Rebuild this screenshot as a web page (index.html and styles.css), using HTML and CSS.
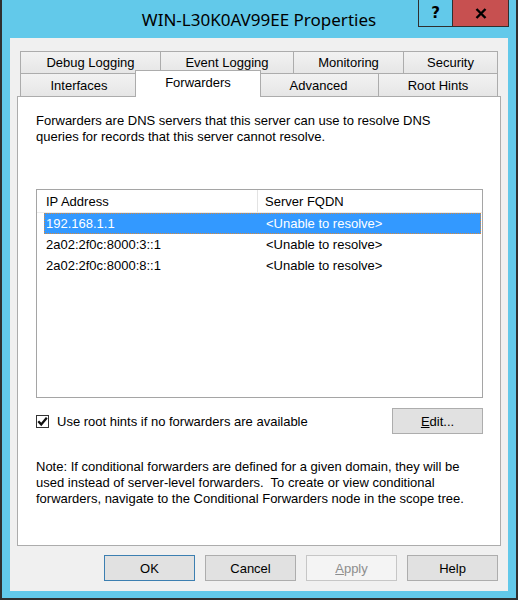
FILE: index.html
```html
<!DOCTYPE html>
<html>
<head>
<meta charset="utf-8">
<link rel="stylesheet" href="styles.css">
</head>
<body>
<div class="window">
  <div class="titlebar">
    <div class="tb-spacer"></div>
    <div class="title">WIN-L30K0AV99EE Properties</div>
    <div class="caption-btns">
      <div class="cbtn help-btn">?</div>
      <div class="cbtn close-btn">
        <svg width="12" height="11" viewBox="0 0 12 11"><path d="M1.5 1 L10.5 10 M10.5 1 L1.5 10" stroke="#000" stroke-width="2.4" fill="none"/></svg>
      </div>
    </div>
  </div>
  <div class="client">
    <div class="tabs">
      <div class="tabrow">
        <div class="tab w-debug">Debug Logging</div>
        <div class="tab w-event">Event Logging</div>
        <div class="tab w-mon">Monitoring</div>
        <div class="tab w-sec last">Security</div>
      </div>
      <div class="tabrow">
        <div class="tab w-int">Interfaces</div>
        <div class="tab selected">Forwarders</div>
        <div class="tab w-adv">Advanced</div>
        <div class="tab w-root last">Root Hints</div>
      </div>
    </div>
    <div class="panel">
      <p class="desc">Forwarders are DNS servers that this server can use to resolve DNS<br>queries for records that this server cannot resolve.</p>
      <div class="list">
        <div class="list-head">
          <div class="col1 hcell">IP Address</div>
          <div class="col2 hcell">Server FQDN</div>
        </div>
        <div class="row sel">
          <div class="col1 cell">192.168.1.1</div>
          <div class="col2 cell">&lt;Unable to resolve&gt;</div>
        </div>
        <div class="row">
          <div class="col1 cell">2a02:2f0c:8000:3::1</div>
          <div class="col2 cell">&lt;Unable to resolve&gt;</div>
        </div>
        <div class="row">
          <div class="col1 cell">2a02:2f0c:8000:8::1</div>
          <div class="col2 cell">&lt;Unable to resolve&gt;</div>
        </div>
      </div>
      <div class="opts">
        <label class="check">
          <span class="box"><svg width="11" height="11" viewBox="0 0 11 11"><path d="M1.3 5.3 L4.2 8.4 L9.8 1.8" stroke="#111" stroke-width="2.3" fill="none"/></svg></span>
          <span>Use root hints if no forwarders are available</span>
        </label>
        <div class="btn"><u>E</u>dit...</div>
      </div>
      <p class="note">Note: If conditional forwarders are defined for a given domain, they will be<br>used instead of server-level forwarders.&nbsp; To create or view conditional<br>forwarders, navigate to the Conditional Forwarders node in the scope tree.</p>
    </div>
    <div class="buttons">
      <div class="btn default">OK</div>
      <div class="btn">Cancel</div>
      <div class="btn disabled"><u>A</u>pply</div>
      <div class="btn">Help</div>
    </div>
  </div>
</div>
</body>
</html>
```

FILE: styles.css
```css
* { box-sizing: border-box; }
html, body { margin: 0; padding: 0; }
body {
  width: 518px;
  height: 600px;
  font-family: "Liberation Sans", Arial, sans-serif;
  font-size: 13px;
  color: #000;
}
.window {
  width: 518px;
  height: 600px;
  background: #62c9ea;
  border: 2px solid #2f2f2f;
  border-top: 0;
  border-bottom-width: 2px;
  display: flex;
  flex-direction: column;
}
.titlebar {
  height: 38px;
  display: grid;
  grid-template-columns: 1fr auto 1fr;
  align-items: start;
}
.title {
  font-family: "Noto Sans", "Open Sans", sans-serif;
  font-size: 17px;
  line-height: 22px;
  margin-top: 9px;
  color: #000;
}
.caption-btns {
  justify-self: end;
  margin-right: 7px;
  display: flex;
  border: 1px solid #2f2f2f;
  border-top: 0;
  height: 27px;
}
.cbtn {
  display: flex;
  align-items: center;
  justify-content: center;
  height: 26px;
}
.help-btn {
  width: 34px;
  border-right: 1px solid #2f2f2f;
  font-family: "DejaVu Sans", sans-serif;
  font-weight: bold;
  font-size: 15px;
}
.close-btn {
  width: 55px;
  background: #c75050;
}
.client {
  margin: 0 8px;
  height: 553px;
  background: #f0f0f0;
  padding: 13px 7px 0 7px;
  display: flex;
  flex-direction: column;
}
.tabs {
  margin-left: 3px;
  display: flex;
  flex-direction: column;
}
.tabrow {
  display: flex;
  align-items: flex-start;
}
.tabrow:first-child .tab { height: 22px; line-height: 22px; }
.tabrow:last-child .tab { height: 23px; line-height: 23px; }
.tab {
  border-top: 1px solid #acacac;
  border-left: 1px solid #acacac;
  background: linear-gradient(#f2f2f2, #e6e6e6);
  text-align: center;
  white-space: nowrap;
}
.tab.last { border-right: 1px solid #acacac; }
.w-debug { width: 140px; }
.w-event { width: 133px; }
.w-mon { width: 110px; }
.w-sec { width: 95px; }
.w-int { width: 117px; }
.w-adv { width: 120px; }
.w-root { width: 120px; }
.tabrow .tab.selected {
  width: 126px;
  height: 27px;
  line-height: 24px;
  margin: -3px -3px -1px -2px;
  background: #fff;
  border-right: 1px solid #acacac;
  position: relative;
  z-index: 1;
}
.panel {
  height: 450px;
  background: #fff;
  border: 1px solid #acacac;
  padding: 16px 0 0 18px;
}
.desc, .note {
  margin: 0;
  line-height: 16px;
}
.list {
  margin-top: 44px;
  width: 447px;
  height: 209px;
  border: 1px solid #a5a5a5;
  background: #fff;
}
.list-head {
  display: flex;
  height: 23px;
  border-bottom: 1px solid #ececec;
}
.hcell {
  line-height: 23px;
}
.list-head .col1 {
  width: 221px;
  padding-left: 9px;
  border-right: 1px solid #e3e3e3;
}
.list-head .col2 {
  padding-left: 7px;
}
.row {
  display: flex;
  height: 21px;
  margin-left: 7px;
  margin-right: 1px;
  border: 1px solid transparent;
}
.row .col1 { width: 214px; padding-left: 1px; }
.row .col2 { padding-left: 7px; }
.row.sel {
  background: #3399ff;
  color: #fff;
  border: 1px dotted #d9883a;
}
.row .cell { line-height: 19px; }
.opts {
  margin-top: 10px;
  width: 447px;
  display: flex;
  align-items: center;
  justify-content: space-between;
}
.check {
  display: flex;
  align-items: center;
  gap: 8px;
}
.box {
  width: 13px;
  height: 13px;
  border: 1px solid #333;
  background: #fff;
  display: flex;
  align-items: center;
  justify-content: center;
}
.btn {
  width: 91px;
  height: 26px;
  background: #e1e1e1;
  border: 1px solid #adadad;
  display: flex;
  align-items: center;
  justify-content: center;
}
.btn.default { border-color: #3c7fb1; }
.btn.disabled {
  background: #f4f4f4;
  border-color: #c6c6c6;
  color: #8d8d8d;
}
.note { margin-top: 25px; }
.buttons {
  margin-top: 9px;
  display: flex;
  justify-content: flex-end;
  gap: 10px;
  padding-right: 3px;
}
```
